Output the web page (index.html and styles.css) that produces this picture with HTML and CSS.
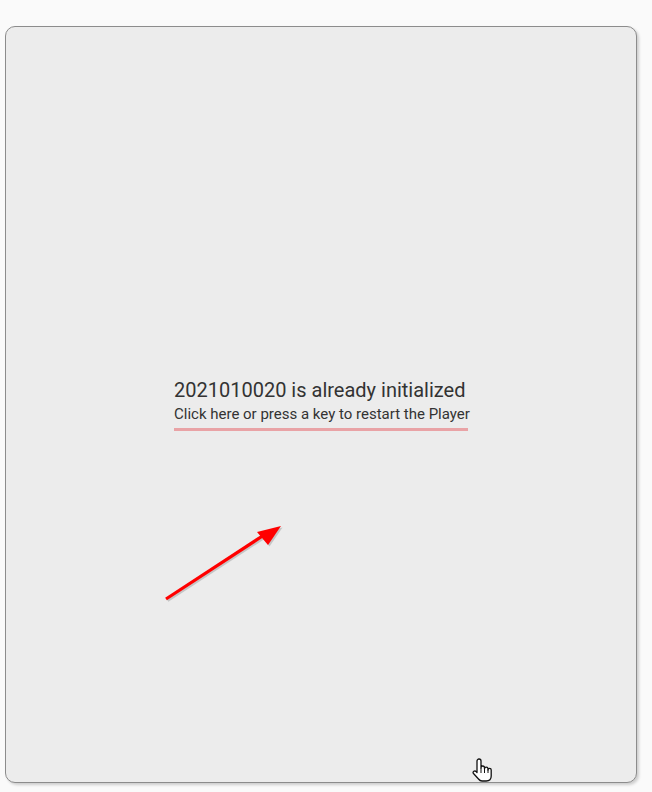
FILE: index.html
```html
<!DOCTYPE html>
<html>
<head>
<meta charset="utf-8">
<link rel="stylesheet" href="styles.css">
</head>
<body>
<div class="card">
  <div class="msg">
    <div class="title">2021010020 is already initialized</div>
    <div class="sub">Click here or press a key to restart the Player</div>
    <div class="bar"></div>
  </div>
</div>
<svg class="arrow" width="652" height="792" viewBox="0 0 652 792">
  <g transform="translate(1.5,1.5)" opacity="0.25">
    <line x1="166" y1="599" x2="264" y2="535" stroke="#555" stroke-width="3.2"/>
    <polygon points="281,526 257,532 268,545" fill="#555"/>
  </g>
  <line x1="166" y1="599" x2="264" y2="535" stroke="#ff0000" stroke-width="3.2"/>
  <polygon points="281,526 257,532 268,545" fill="#ff0000"/>
  <g transform="translate(471,757)">
    <path d="M6 4a2 2 0 0 1 4 0V11q0-2 1.75-2t1.75 2V12q0-1.8 1.75-1.8t1.75 1.8V13q0-1.6 1.6-1.6t1.6 1.6V19q0 5-5 5H11q-2 0-3.5-2L2.5 16.5q-1-1.4.3-2.2t2.3.3L6 15.5Z" fill="#fff" stroke="#111" stroke-width="1.3" stroke-linejoin="round"/>
    <path d="M10 11v5M13.5 11.5v4.5M17 12.5v3.5" stroke="#111" stroke-width="1"/>
  </g>
</svg>
</body>
</html>
```
FILE: styles.css
```css
html, body {
  margin: 0;
  padding: 0;
  background: #fafafa;
  width: 652px;
  height: 792px;
  overflow: hidden;
}
.card {
  margin: 26px 0 0 5px;
  width: 630px;
  height: 755px;
  border: 1px solid #8c8c8c;
  border-radius: 10px;
  background: #ececec;
  box-shadow: 2px 2px 3px rgba(0,0,0,0.18);
  box-sizing: content-box;
  padding: 0;
}
.msg {
  margin: 351px 0 0 168px;
  width: 294px;
  font-family: Roboto, "Liberation Sans", sans-serif;
  color: #333;
}
.title {
  font-size: 20px;
  line-height: 24px;
  white-space: nowrap;
}
.sub {
  font-size: 15px;
  line-height: 18px;
  margin-top: 3px;
  white-space: nowrap;
}
.bar {
  height: 3px;
  background: #e9a3a6;
  margin-top: 5px;
  width: 294px;
}
.arrow {
  position: absolute;
  left: 0;
  top: 0;
  pointer-events: none;
}
```
